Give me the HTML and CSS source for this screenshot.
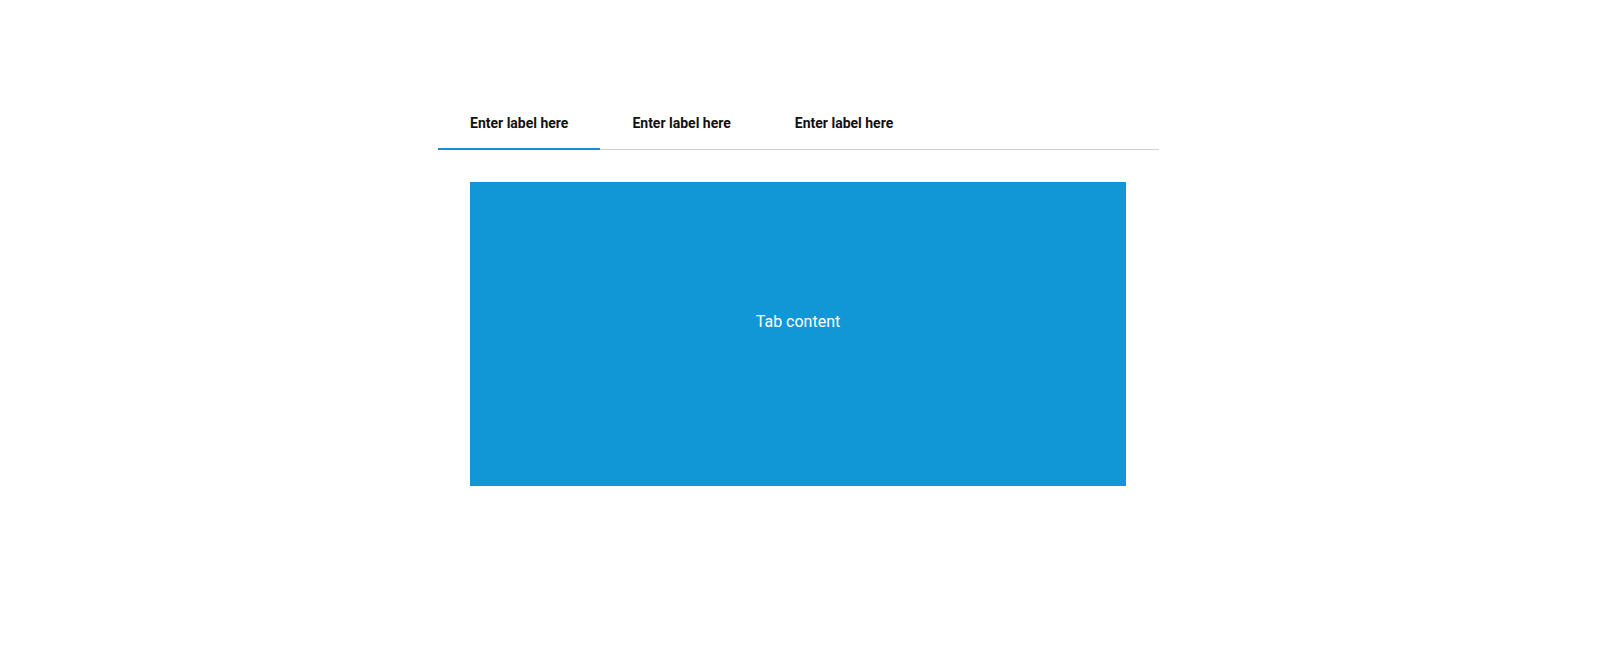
FILE: index.html
```html
<!DOCTYPE html>
<html lang="en">
<head>
  <meta charset="UTF-8">
  <meta name="viewport" content="width=device-width, initial-scale=1.0">
  <title>Tabs</title>
  <link rel="stylesheet" href="styles.css">
</head>
<body>
  <div class="tabs-wrap">
    <div class="tabs">
      <button class="tab active">Enter label here</button>
      <button class="tab">Enter label here</button>
      <button class="tab">Enter label here</button>
    </div>
    <div class="tab-panel">Tab content</div>
  </div>
</body>
</html>
```

FILE: styles.css
```css
body {
  margin: 0;
  font-family: Roboto, "Liberation Sans", Arial, sans-serif;
  background: #fff;
  color: #111;
}

.tabs-wrap {
  width: 721px;
  margin: 102px auto 0;
}

.tabs {
  display: flex;
  border-bottom: 1px solid #d3d3d3;
}

.tab {
  position: relative;
  padding: 11px 32px 16px;
  border: none;
  background: none;
  font-family: inherit;
  font-size: 14px;
  font-weight: 700;
  line-height: 20px;
  color: #111;
  cursor: pointer;
}

.tab.active::after {
  content: "";
  position: absolute;
  left: 0;
  right: 0;
  bottom: -1px;
  height: 2px;
  background: #1192d6;
}

.tab-panel {
  margin: 32px 33px 0 32px;
  height: 304px;
  box-sizing: border-box;
  padding-top: 128px;
  background: #1197d6;
  color: #fff;
  font-size: 16px;
  line-height: 24px;
  text-align: center;
}
```
